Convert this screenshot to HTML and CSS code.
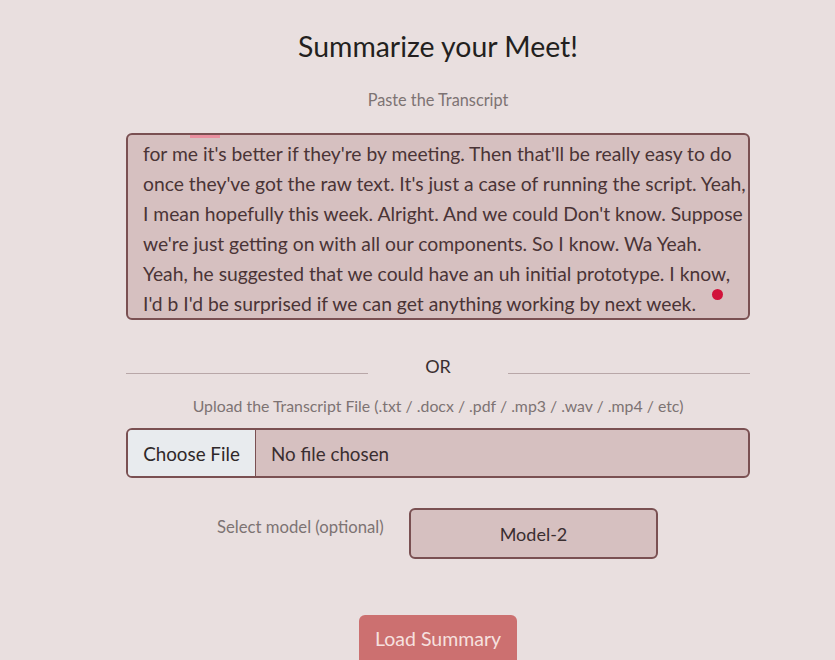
FILE: index.html
```html
<!DOCTYPE html>
<html>
<head>
<meta charset="utf-8">
<link rel="stylesheet" href="styles.css">
</head>
<body>
<main class="page">
  <h1 class="title">Summarize your Meet!</h1>
  <p class="label label-paste">Paste the Transcript</p>
  <div class="transcript">
    <div class="transcript-text">
      <span class="line">for me it's better if they're by meeting. Then that'll be really easy to do</span>
      <span class="line">once they've got the raw text. It's just a case of running the script. Yeah,</span>
      <span class="line">I mean hopefully this week. Alright. And we could Don't know. Suppose</span>
      <span class="line">we're just getting on with all our components. So I know. Wa Yeah.</span>
      <span class="line">Yeah, he suggested that we could have an uh initial prototype. I know,</span>
      <span class="line">I'd b I'd be surprised if we can get anything working by next week.</span>
    </div>
    <span class="spell-mark"></span>
    <span class="dot"></span>
  </div>
  <div class="or-row">
    <span class="rule"></span>
    <span class="or">OR</span>
    <span class="rule"></span>
  </div>
  <p class="label label-upload">Upload the Transcript File (.txt / .docx / .pdf / .mp3 / .wav / .mp4 / etc)</p>
  <div class="file">
    <span class="file-btn">Choose File</span>
    <span class="file-name">No file chosen</span>
  </div>
  <div class="model-row">
    <span class="label model-label">Select model (optional)</span>
    <div class="select">Model-2</div>
  </div>
  <div class="actions">
    <button class="load">Load Summary</button>
  </div>
</main>
</body>
</html>
```

FILE: styles.css
```css
html, body {
  margin: 0;
  padding: 0;
  background: #e9dfdf;
  height: 660px;
  overflow: hidden;
}
body {
  font-family: "Lato", "Liberation Sans", sans-serif;
  color: #3a2a2c;
}
.page {
  width: 624px;
  margin-left: 126px;
  display: flex;
  flex-direction: column;
}
.title {
  margin: 28px 0 0;
  text-align: center;
  font-weight: 400;
  font-size: 28.4px;
  line-height: 36px;
  color: #231f20;
}
.label {
  color: #7d7373;
  font-size: 16.3px;
  line-height: 20px;
}
.label-paste {
  margin: 26px 0 0;
  text-align: center;
}
.transcript {
  position: relative;
  margin-top: 23px;
  height: 183px;
  border: 2px solid #7a5052;
  border-radius: 6px;
  background: #d6c0c0;
  overflow: hidden;
  padding-left: 15px;
}
.transcript-text {
  padding-top: 4px;
  font-size: 19.3px;
  line-height: 30px;
  color: #4a3436;
  display: flex;
  flex-direction: column;
}
.line {
  white-space: nowrap;
}
.spell-mark {
  position: absolute;
  left: 62px;
  top: 0;
  width: 30px;
  height: 3px;
  background: #e98f9f;
}
.dot {
  position: absolute;
  left: 584px;
  top: 154px;
  width: 11px;
  height: 11px;
  border-radius: 50%;
  background: #d1123a;
}
.or-row {
  margin-top: 34px;
  display: flex;
  align-items: center;
  height: 24px;
}
.rule {
  flex: 1;
  height: 1px;
  background: #b8a7a8;
  margin-top: 14px;
}
.or {
  width: 140px;
  text-align: center;
  font-size: 18px;
  color: #3a2e30;
}
.label-upload {
  margin: 18px 0 0;
  text-align: center;
  font-size: 15.85px;
}
.file {
  margin-top: 12px;
  height: 46px;
  border: 2px solid #7a5052;
  border-radius: 6px;
  background: #d6c0c0;
  overflow: hidden;
  display: flex;
  align-items: stretch;
  font-size: 18.8px;
  color: #2f2829;
}
.file-btn {
  width: 127px;
  background: #e8ebee;
  border-right: 1px solid #7a5052;
  display: flex;
  align-items: center;
  justify-content: center;
}
.file-name {
  display: flex;
  align-items: center;
  padding-left: 15px;
  color: #3a2e30;
}
.model-row {
  margin-top: 30px;
  display: flex;
  align-items: flex-start;
  padding-left: 91px;
}
.model-label {
  padding-top: 9px;
  width: 192px;
  font-size: 16.7px;
}
.select {
  width: 245px;
  height: 47px;
  border: 2px solid #7a5052;
  border-radius: 6px;
  background: #d6c0c0;
  display: flex;
  align-items: center;
  justify-content: center;
  font-size: 18px;
  color: #3a2e30;
}
.actions {
  margin-top: 56px;
  display: flex;
  justify-content: center;
}
.load {
  width: 158px;
  height: 50px;
  border: none;
  border-radius: 6px;
  background: #cc7070;
  color: #f6e0df;
  font-family: "Lato", "Liberation Sans", sans-serif;
  font-size: 19.5px;
  padding: 0 0 4px;
}
```
